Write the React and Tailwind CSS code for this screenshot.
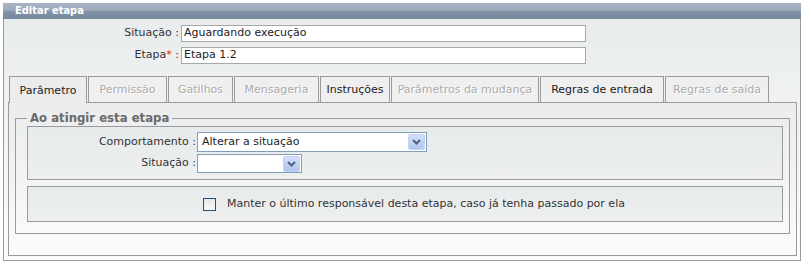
import React from "react";

const tabs = [
  { label: "Parâmetro", w: "w-[78px]", state: "active" },
  { label: "Permissão", w: "w-[79px]", state: "disabled" },
  { label: "Gatilhos", w: "w-[65px]", state: "disabled" },
  { label: "Mensageria", w: "w-[85px]", state: "disabled" },
  { label: "Instruções", w: "w-[70px]", state: "enabled" },
  { label: "Parâmetros da mudança", w: "w-[148px]", state: "disabled" },
  { label: "Regras de entrada", w: "w-[124px]", state: "enabled" },
  { label: "Regras de saída", w: "w-[104px]", state: "disabled" },
];

function Tab({ label, w, state }) {
  const base =
    "flex items-center justify-center pt-[2px] border border-b-0 border-[#9a9a9a] whitespace-nowrap " +
    w;
  if (state === "active") {
    return (
      <div className={base + " h-[27px] relative z-10 bg-[#eaeced] text-[#222]"}>
        {label}
      </div>
    );
  }
  if (state === "enabled") {
    return <div className={base + " h-[26px] bg-[#efefef] text-[#222]"}>{label}</div>;
  }
  return (
    <div className={base + " h-[26px] bg-[#efefef] text-[#ababab] [text-shadow:1px_1px_0_#fff]"}>
      {label}
    </div>
  );
}

function DropButton() {
  return (
    <div className="w-[17px] h-[16px] mr-[1px] flex items-center justify-center border border-[#c3d1f2] rounded-[2px] bg-linear-to-b from-[#d3dffa] to-[#b3c5f0]">
      <svg width="9" height="6" viewBox="0 0 9 6">
        <path d="M1 1 L4.5 4.5 L8 1" stroke="#4d6185" strokeWidth="2" fill="none" />
      </svg>
    </div>
  );
}

export default function App() {
  return (
    <div className="w-[806px] h-[263px] bg-white pt-[3px] pl-[3px] font-['DejaVu_Sans',sans-serif] text-[11px] text-[#333]">
      <div className="w-[798px]">
        <div className="h-[16px] pl-[12px] flex items-center bg-[linear-gradient(to_bottom,#a9b5c3_0%,#9caabb_45%,#8092a8_55%,#77899f_100%)] text-white font-bold text-[11px] font-['DejaVu_Sans_Condensed','Liberation_Sans',sans-serif]">
          Editar etapa
        </div>
        <div className="h-[242px] border-x border-b border-[#9a9a9a] bg-linear-to-b from-[#e9eced] to-[#fcfcfc] pt-[6px]">
          <div className="flex flex-col gap-[5px]">
            <div className="flex items-center">
              <div className="w-[175px] text-right text-[#333]">Situação :</div>
              <div className="ml-[2px] w-[405px] h-[17px] border border-[#a8a8a8] bg-white pl-[2px] flex items-center text-[#222]">
                Aguardando execução
              </div>
            </div>
            <div className="flex items-center">
              <div className="w-[175px] text-right text-[#333]">
                Etapa<span className="text-[#e41b1b]">*</span> :
              </div>
              <div className="ml-[2px] w-[405px] h-[17px] border border-[#a8a8a8] bg-white pl-[2px] flex items-center text-[#222]">
                Etapa 1.2
              </div>
            </div>
          </div>

          <div className="mt-[12px] ml-[5px] flex gap-[1px] h-[26px]">
            {tabs.map((t) => (
              <Tab key={t.label} {...t} />
            ))}
          </div>

          <div className="ml-[4px] w-[789px] h-[154px] border border-[#9a9a9a] bg-linear-to-b from-[#eaeced] to-[#fbfbfb] pt-[7px] pl-[6px]">
            <fieldset className="w-[775px] border border-[#9a9a9a] pl-[11px] pr-[6px] pb-[11px]">
              <legend className="px-[3px] h-[16px] leading-[16px] text-[13px] font-bold text-[#6a6a6a] font-['DejaVu_Sans_Condensed','Liberation_Sans',sans-serif]">
                Ao atingir esta etapa
              </legend>
              <div className="w-[756px] h-[54px] border border-[#9a9a9a] bg-linear-to-b from-[#e8ebeb] to-[#edefef] pt-[5px] flex flex-col gap-[2px]">
                <div className="flex items-center h-[20px]">
                  <div className="w-[168px] text-right text-[#333]">Comportamento :</div>
                  <div className="ml-[1px] w-[230px] h-[20px] border border-[#7f9db9] bg-white flex items-center">
                    <span className="flex-1 pl-[4px] text-[#222]">Alterar a situação</span>
                    <DropButton />
                  </div>
                </div>
                <div className="flex items-center h-[19px]">
                  <div className="w-[168px] text-right text-[#333]">Situação :</div>
                  <div className="ml-[1px] w-[105px] h-[19px] border border-[#7f9db9] bg-white flex items-center">
                    <span className="flex-1" />
                    <DropButton />
                  </div>
                </div>
              </div>
              <div className="mt-[6px] w-[756px] h-[36px] border border-[#9a9a9a] bg-linear-to-b from-[#e8ebeb] to-[#eef0f0] flex items-center pl-[175px]">
                <div className="w-[13px] h-[13px] border border-[#1c5180] bg-linear-to-b from-[#e4e6e6] to-[#fafafa]" />
                <span className="ml-[11px] text-[#333]">
                  Manter o último responsável desta etapa, caso já tenha passado por ela
                </span>
              </div>
            </fieldset>
          </div>
        </div>
      </div>
    </div>
  );
}
